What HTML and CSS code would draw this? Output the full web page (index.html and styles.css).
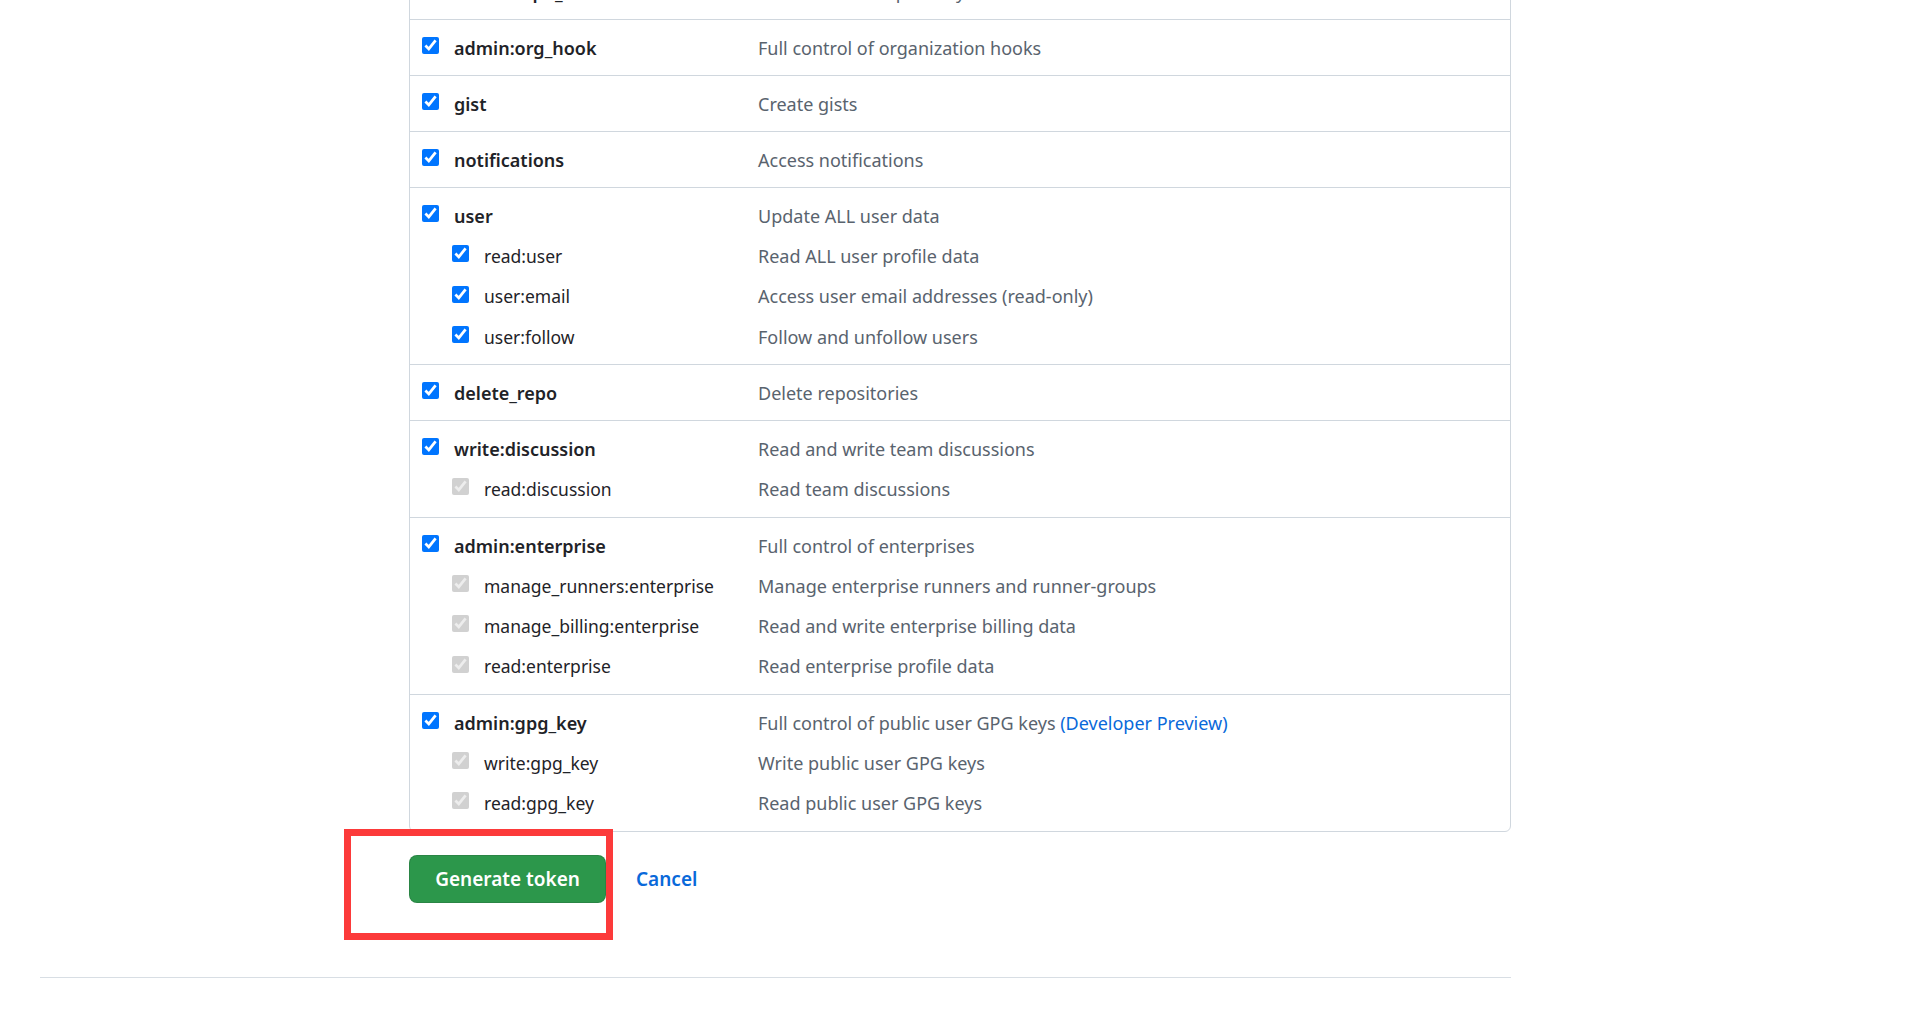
FILE: index.html
```html
<!DOCTYPE html>
<html lang="en">
<head>
<meta charset="utf-8">
<title>New personal access token</title>
<link rel="stylesheet" href="styles.css">
</head>
<body>
<div class="page">
  <div class="layout">
    <div class="sidebar"></div>
    <main class="main">
      <div class="scopes">
        <div class="group">
          <div class="row"><label class="name top"><input type="checkbox" checked>admin:repo_hook</label><span class="desc">Full control of repository hooks</span></div>
        </div>
        <div class="group">
          <div class="row"><label class="name top"><input type="checkbox" checked>admin:org_hook</label><span class="desc">Full control of organization hooks</span></div>
        </div>
        <div class="group">
          <div class="row"><label class="name top"><input type="checkbox" checked>gist</label><span class="desc">Create gists</span></div>
        </div>
        <div class="group">
          <div class="row"><label class="name top"><input type="checkbox" checked>notifications</label><span class="desc">Access notifications</span></div>
        </div>
        <div class="group">
          <div class="row"><label class="name top"><input type="checkbox" checked>user</label><span class="desc">Update ALL user data</span></div>
          <div class="row sub"><label class="name"><input type="checkbox" checked>read:user</label><span class="desc">Read ALL user profile data</span></div>
          <div class="row sub"><label class="name"><input type="checkbox" checked>user:email</label><span class="desc">Access user email addresses (read-only)</span></div>
          <div class="row sub"><label class="name"><input type="checkbox" checked>user:follow</label><span class="desc">Follow and unfollow users</span></div>
        </div>
        <div class="group">
          <div class="row"><label class="name top"><input type="checkbox" checked>delete_repo</label><span class="desc">Delete repositories</span></div>
        </div>
        <div class="group">
          <div class="row"><label class="name top"><input type="checkbox" checked>write:discussion</label><span class="desc">Read and write team discussions</span></div>
          <div class="row sub"><label class="name"><input type="checkbox" checked disabled>read:discussion</label><span class="desc">Read team discussions</span></div>
        </div>
        <div class="group">
          <div class="row"><label class="name top"><input type="checkbox" checked>admin:enterprise</label><span class="desc">Full control of enterprises</span></div>
          <div class="row sub"><label class="name"><input type="checkbox" checked disabled>manage_runners:enterprise</label><span class="desc">Manage enterprise runners and runner-groups</span></div>
          <div class="row sub"><label class="name"><input type="checkbox" checked disabled>manage_billing:enterprise</label><span class="desc">Read and write enterprise billing data</span></div>
          <div class="row sub"><label class="name"><input type="checkbox" checked disabled>read:enterprise</label><span class="desc">Read enterprise profile data</span></div>
        </div>
        <div class="group">
          <div class="row"><label class="name top"><input type="checkbox" checked>admin:gpg_key</label><span class="desc">Full control of public user GPG keys <a class="link" href="#">(Developer Preview)</a></span></div>
          <div class="row sub"><label class="name"><input type="checkbox" checked disabled>write:gpg_key</label><span class="desc">Write public user GPG keys</span></div>
          <div class="row sub"><label class="name"><input type="checkbox" checked disabled>read:gpg_key</label><span class="desc">Read public user GPG keys</span></div>
        </div>
      </div>
      <div class="actions">
        <button class="btn-primary" type="button">Generate token</button>
        <a class="cancel" href="#">Cancel</a>
        <div class="highlight"></div>
      </div>
    </main>
  </div>
  <footer class="footer"></footer>
</div>
</body>
</html>
```
FILE: styles.css
```css
* { box-sizing: border-box; }
body {
  margin: 0;
  background: #ffffff;
  font-family: "Noto Sans", "Segoe UI", sans-serif;
  font-size: 18px;
  color: #1f2328;
  overflow: hidden;
}
.page {
  padding-left: 40px;
  width: 1511px;
}
.layout {
  display: grid;
  grid-template-columns: 369px 1102px;
  margin-top: -37px;
}
.scopes {
  border: 1px solid #d0d7de;
  border-radius: 6px;
}
.group {
  padding: 8px 0 7px;
  border-bottom: 1px solid #d0d7de;
}
.group:last-child { border-bottom: none; }
.row {
  display: grid;
  grid-template-columns: 336px 1fr;
  padding-left: 12px;
  height: 40px;
  line-height: 40px;
  white-space: nowrap;
}
.row.sub { height: 40.4px; line-height: 40.4px; }
.name {
  display: flex;
  align-items: center;
  color: #1f2328;
}
.name.top { font-weight: 600; }
.sub .name { padding-left: 30px; font-size: 17.5px; }
.name input {
  width: 17px;
  height: 17px;
  margin: 0 15px 5px 0;
  accent-color: #0075ff;
}
.desc { color: #59636e; }
.link { color: #0969da; text-decoration: none; }
.actions {
  position: relative;
  display: flex;
  align-items: center;
  margin-top: 23px;
  height: 48px;
}
.btn-primary {
  height: 48px;
  width: 197px;
  padding: 0;
  border: 1px solid rgba(31, 35, 40, 0.15);
  border-radius: 8px;
  background: #2c974b;
  color: #ffffff;
  font-family: inherit;
  font-size: 19px;
  font-weight: 600;
}
.cancel {
  margin-left: 30px;
  color: #0969da;
  font-size: 19px;
  font-weight: 600;
  text-decoration: none;
}
.highlight {
  position: absolute;
  left: -65px;
  top: -26px;
  width: 269px;
  height: 111px;
  border: 7px solid #fc3a3a;
}
.footer {
  margin-top: 74px;
  border-top: 1px solid #d8dee4;
  height: 60px;
}
```
